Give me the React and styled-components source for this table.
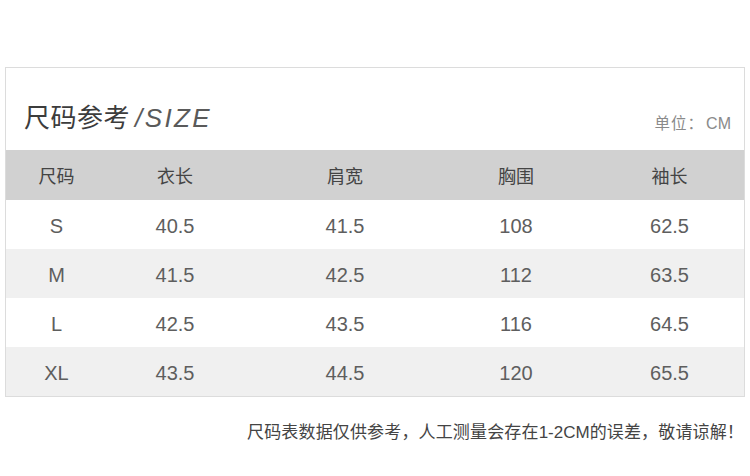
import React from 'react'
import styled, {createGlobalStyle} from 'styled-components'

const columns = ['尺码', '衣长', '肩宽', '胸围', '袖长']

const rows = [
    ['S', '40.5', '41.5', '108', '62.5'],
    ['M', '41.5', '42.5', '112', '63.5'],
    ['L', '42.5', '43.5', '116', '64.5'],
    ['XL', '43.5', '44.5', '120', '65.5'],
]

const App = () => {
    return (
        <Page>
            <GlobalStyle/>
            <Card>
                <TitleBar>
                    <Title>
                        尺码参考<Latin>/SIZE</Latin>
                    </Title>
                    <Unit>单位：<UnitLatin>CM</UnitLatin></Unit>
                </TitleBar>
                <HeadRow>
                    {columns.map(c => <HeadCell key={c}>{c}</HeadCell>)}
                </HeadRow>
                {rows.map((r, i) => (
                    <Row key={r[0]} striped={i % 2 === 1}>
                        {r.map((v, j) => <Cell key={j}>{v}</Cell>)}
                    </Row>
                ))}
            </Card>
            <Note>尺码表数据仅供参考，人工测量会存在<NoteLatin>1-2CM</NoteLatin>的误差，敬请谅解！</Note>
        </Page>
    )
}

const GlobalStyle = createGlobalStyle`
  body {
    margin: 0;
    background: #fff;
    font-family: "Noto Sans CJK SC", sans-serif;
  }
`

const Page = styled.div`
  width: 750px;
  height: 476px;
  box-sizing: border-box;
  padding: 67px 5px 0;
  background: #fff;
`

const Card = styled.div`
  border: 1px solid #dcdcdc;
  box-sizing: border-box;
  width: 740px;
`

const TitleBar = styled.div`
  height: 82px;
  display: flex;
  align-items: flex-end;
  justify-content: space-between;
  padding: 0 13px 15px 18px;
  box-sizing: border-box;
`

const Title = styled.div`
  font-size: 26px;
  line-height: 34px;
  color: #3c3c3c;
  letter-spacing: 0.5px;
`

const Latin = styled.span`
  font-family: "Liberation Sans", sans-serif;
  font-style: italic;
  font-weight: 300;
  margin-left: 5px;
  letter-spacing: 2.4px;
  color: #5a5a5a;
`

const Unit = styled.div`
  font-size: 15.5px;
  line-height: 22px;
  letter-spacing: 1px;
  color: #8a8a8a;
`

const UnitLatin = styled.span`
  font-family: "Liberation Sans", sans-serif;
  font-size: 16px;
  letter-spacing: 0;
  margin-left: 2px;
`

const grid = `
  display: grid;
  grid-template-columns: 101px 136px 204px 138px 159px;
  align-items: center;
  justify-items: center;
`

const HeadRow = styled.div`
  ${grid};
  height: 50px;
  background: #d1d1d1;
`

const HeadCell = styled.div`
  font-size: 18px;
  color: #444;
  &:last-child {
    padding-left: 10px;
  }
`

const Row = styled.div`
  ${grid};
  height: 49px;
  background: ${({striped}) => striped ? '#f0f0f0' : '#fff'};
`

const Cell = styled.div`
  font-family: "Liberation Sans", sans-serif;
  font-size: 20px;
  color: #5e5e5e;
  padding-top: 3px;
  &:last-child {
    padding-left: 10px;
  }
`

const Note = styled.div`
  margin-top: 22px;
  padding-right: 1px;
  text-align: right;
  font-size: 17px;
  line-height: 24px;
  letter-spacing: 0.15px;
  color: #444;
`

const NoteLatin = styled.span`
  font-family: "Liberation Sans", sans-serif;
  letter-spacing: 0;
`

export default App
